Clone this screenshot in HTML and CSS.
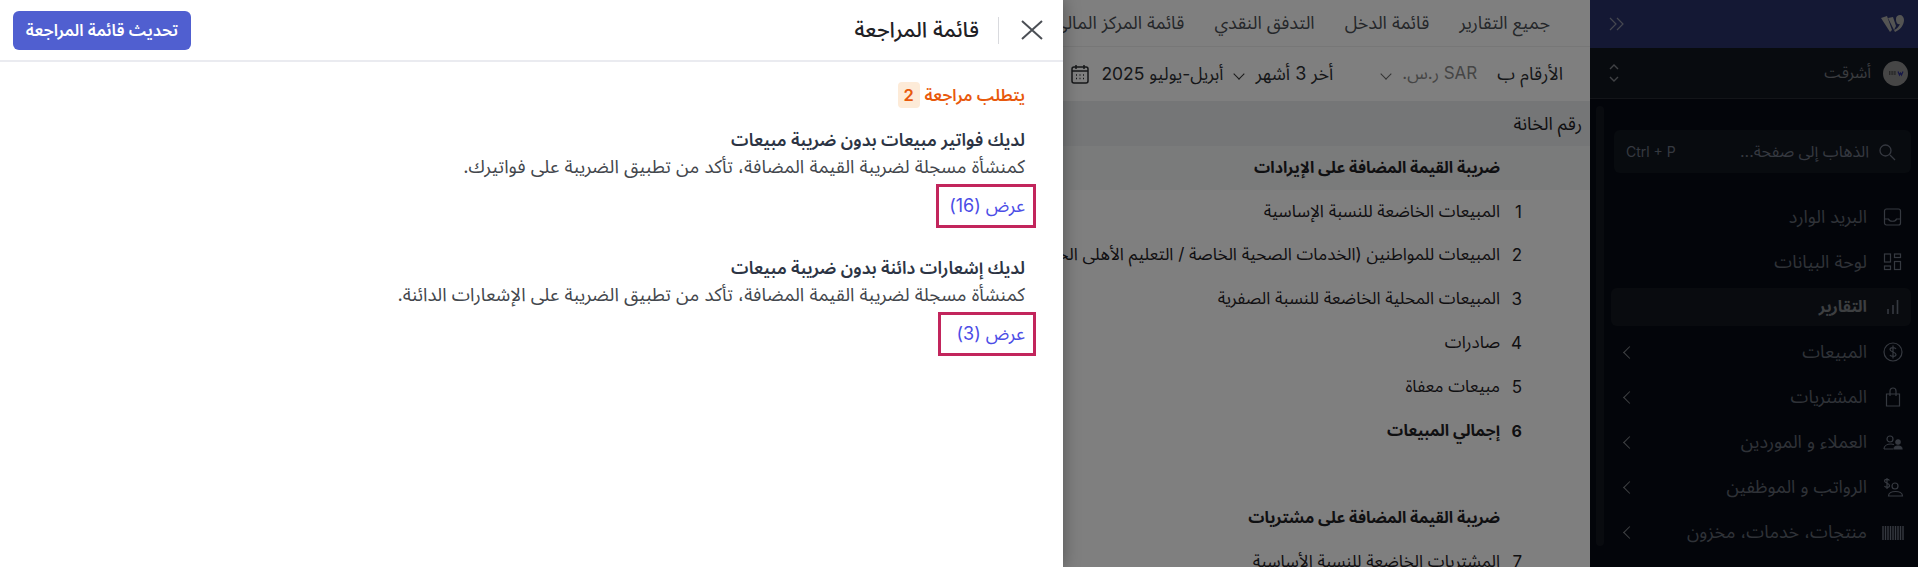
FILE: index.html
```html
<!DOCTYPE html>
<html lang="ar" dir="rtl">
<head>
    <meta charset="UTF-8">
    <title>قائمة المراجعة</title>
    <link rel="stylesheet" href="styles.css">
</head>
<body>
    <div class="app">
        <aside class="sidebar">
            <div class="brand">
                <svg class="logo" width="23" height="18" viewBox="0 0 23 18"><path d="M0 3l6-2 5 14-2 2zM7 3l5-1 3 9-2 4zM15 4c0-3 2-4 4-4s4 2 4 5c0 5-4 10-9 12l-1-2c3-1 5-4 6-6-3 1-4-2-4-5z" fill="#a9a9a6"/></svg>
                <svg class="icon-sm" width="16" height="14" viewBox="0 0 16 14"><path d="M8 1l6 6-6 6M1 1l6 6-6 6" fill="none" stroke="#8b8f9f" stroke-width="1.2"/></svg>
            </div>
            <div class="org">
                <svg class="org-avatar" width="25" height="25" viewBox="0 0 25 25"><circle cx="12.500" cy="12.500" r="12.500" fill="#8c8c8c"/><path d="M6 11h7M6 13h7" stroke="#3c3c3c" stroke-width="1.500" stroke-dasharray="1 .6"/><path d="M15 10.500l1.500 3.500 1-2 1 2 1.500-3.500" fill="none" stroke="#2b2f8f" stroke-width="1.200"/></svg>
                <span class="org-name">أشرقت</span>
                <svg class="org-switch" width="10" height="20" viewBox="0 0 10 20"><path d="M1 6l4-4 4 4M1 14l4 4 4-4" fill="none" stroke="#80848a" stroke-width="1.4"/></svg>
            </div>
            <div class="side-body">
                <div class="search">
                    <svg width="18" height="18" viewBox="0 0 18 18"><circle cx="7.500" cy="7.500" r="5.500" fill="none" stroke="#6b7280" stroke-width="1.3"/><path d="M12 12l5 5" stroke="#6b7280" stroke-width="1.3"/></svg>
                    <span class="search-text">الذهاب إلى صفحة...</span>
                    <span class="search-key">Ctrl + P</span>
                </div>
                <nav class="menu">
                    <a class="menu-item">
                        <svg viewBox="0 0 20 20"><rect x="1.500" y="2" width="16" height="16" rx="2"/><path d="M1.500 12h4c1 3 7 3 8 0h4"/></svg>
                        <span>البريد الوارد</span>
                    </a>
                    <a class="menu-item">
                        <svg viewBox="0 0 20 20"><rect x="1.500" y="2" width="6" height="8"/><rect x="11.500" y="2" width="6" height="3.500"/><rect x="1.500" y="14" width="6" height="3.500"/><rect x="11.500" y="9.500" width="6" height="8"/></svg>
                        <span>لوحة البيانات</span>
                    </a>
                    <a class="menu-item active">
                        <svg viewBox="0 0 20 20"><path d="M5 17v-5M10 17V8M14.500 17V3" stroke-width="1.600"/></svg>
                        <span>التقارير</span>
                    </a>
                    <a class="menu-item">
                        <svg viewBox="0 0 20 20"><circle cx="10" cy="10" r="9"/><path d="M13 7c-1-2-6-2-6 .500s6 2.500 6 5-5 2.500-6 .500M10 3.500v13"/></svg>
                        <span>المبيعات</span><i class="chev"></i>
                    </a>
                    <a class="menu-item">
                        <svg viewBox="0 0 20 20"><path d="M3.500 7h13v12h-13zM7 9V4c0-4 6-4 6 0v5"/></svg>
                        <span>المشتريات</span><i class="chev"></i>
                    </a>
                    <a class="menu-item">
                        <svg viewBox="0 0 20 20"><circle cx="7" cy="7" r="3"/><path d="M1 17c0-3 3-5 7-5 1 0 2 .2 3 .5M1 17h9"/><circle cx="15" cy="10" r="2.200" fill="#6b7280"/><path d="M11 17c0-4 8-4 8 0z" fill="#6b7280"/></svg>
                        <span>العملاء و الموردين</span><i class="chev"></i>
                    </a>
                    <a class="menu-item">
                        <svg viewBox="0 0 20 20"><circle cx="12" cy="9" r="3"/><path d="M5.500 19c0-6 14-6 14 0z"/><path d="M6.500 3.500c-1-1.500-5-1.500-5 .500s5 2 5 4.500-4 2.500-5 .500M4 1v11"/></svg>
                        <span>الرواتب و الموظفين</span><i class="chev"></i>
                    </a>
                    <a class="menu-item">
                        <svg viewBox="0 0 20 20"><path d="M0 4v14M2.500 4v14M5 4v14M7.500 4v14M10 4v14M12.500 4v14M15 4v14M17.500 4v14M20 4v14" stroke-width="1.400"/></svg>
                        <span>منتجات، خدمات، مخزون</span><i class="chev"></i>
                    </a>
                </nav>
            </div>
        </aside>

        <main class="main">
            <div class="tabs">
                <span>جميع التقارير</span>
                <span>قائمة الدخل</span>
                <span>التدفق النقدي</span>
                <span>قائمة المركز المالي</span>
            </div>
            <div class="toolbar">
                <span class="toolbar-label">الأرقام ب</span>
                <span class="toolbar-cur">SAR ر.س.</span>
                <i class="chev-down chev-muted"></i>
                <span class="toolbar-range">أخر 3 أشهر</span>
                <i class="chev-down"></i>
                <span class="toolbar-date">أبريل-يوليو 2025</span>
                <svg width="18" height="20" viewBox="0 0 18 20"><rect x="1" y="3" width="16" height="16" rx="2" fill="none" stroke="#2d2f33" stroke-width="1.500"/><path d="M1 7h16M5 1v4M13 1v4M5 11h1M8.500 11h1M12 11h1M5 14.500h1M8.500 14.500h1M12 14.500h1" stroke="#2d2f33" stroke-width="1.500"/></svg>
            </div>
            <div class="table-head">رقم الخانة</div>
            <div class="row row-section"><span class="num"></span><span>ضريبة القيمة المضافة على الإيرادات</span></div>
            <div class="row"><span class="num">1</span><span>المبيعات الخاضعة للنسبة الإساسية</span></div>
            <div class="row"><span class="num">2</span><span>المبيعات للمواطنين (الخدمات الصحية الخاصة / التعليم الأهلى الخاص)</span></div>
            <div class="row"><span class="num">3</span><span>المبيعات المحلية الخاضعة للنسبة الصفرية</span></div>
            <div class="row"><span class="num">4</span><span>صادرات</span></div>
            <div class="row"><span class="num">5</span><span>مبيعات معفاة</span></div>
            <div class="row row-total"><span class="num">6</span><span>إجمالي المبيعات</span></div>
            <div class="row-gap"></div>
            <div class="row row-total"><span class="num"></span><span>ضريبة القيمة المضافة على مشتريات</span></div>
            <div class="row"><span class="num">7</span><span>المشتريات الخاضعة للنسبة الأساسية</span></div>
        </main>

        <div class="overlay"></div>

        <section class="drawer">
            <header class="drawer-head">
                <svg class="close" width="22" height="20" viewBox="0 0 22 20"><path d="M1 1l20 18M21 1L1 19" stroke="#4b4f55" stroke-width="2"/></svg>
                <span class="drawer-sep"></span>
                <h2 class="drawer-title">قائمة المراجعة</h2>
                <button class="refresh-btn">تحديث قائمة المراجعة</button>
            </header>
            <div class="drawer-body">
                <div class="group-title">يتطلب مراجعة <span class="badge">2</span></div>
                <div class="check">
                    <div class="check-title">لديك فواتير مبيعات بدون ضريبة مبيعات</div>
                    <div class="check-desc">كمنشأة مسجلة لضريبة القيمة المضافة، تأكد من تطبيق الضريبة على فواتيرك.</div>
                    <a class="check-link">عرض (16)</a>
                </div>
                <div class="check">
                    <div class="check-title">لديك إشعارات دائنة بدون ضريبة مبيعات</div>
                    <div class="check-desc">كمنشأة مسجلة لضريبة القيمة المضافة، تأكد من تطبيق الضريبة على الإشعارات الدائنة.</div>
                    <a class="check-link">عرض (3)</a>
                </div>
            </div>
        </section>
    </div>
</body>
</html>
```

FILE: styles.css
```css
* {
    box-sizing: border-box;
}

html, body {
    margin: 0;
    height: 567px;
    overflow: hidden;
}

body {
    font-family: Inter, "Noto Sans Arabic", "DejaVu Sans", sans-serif;
    font-size: 17px;
    color: #1f2125;
}

.app {
    position: relative;
    display: flex;
    width: 1918px;
    height: 567px;
    overflow: hidden;
    background: #fff;
}

/* sidebar */
.sidebar {
    width: 328px;
    flex: none;
    background: #070b14;
    color: #6b7280;
    font-size: 18px;
}

.brand {
    height: 48px;
    background: #283069;
    display: flex;
    align-items: center;
    justify-content: space-between;
    padding: 0 14px 0 19px;
}

.org {
    height: 51px;
    background: #11161f;
    border-bottom: 1px solid #272b33;
    display: flex;
    align-items: center;
    gap: 12px;
    padding: 0 10px 0 19px;
}

.org-avatar {
    flex: none;
}

.org-name {
    flex: 1;
    color: #75797f;
    font-size: 16px;
}

.side-body {
    position: relative;
    padding: 31px 7px 0 24px;
}

.side-body::before {
    content: "";
    position: absolute;
    left: 6px;
    top: 7px;
    width: 8px;
    height: 440px;
    border-radius: 4px;
    background: #12161f;
}

.search {
    height: 43px;
    border-radius: 6px;
    background: #11161f;
    display: flex;
    align-items: center;
    gap: 9px;
    padding: 0 15px 0 12px;
    font-size: 16px;
}

.search-text {
    flex: 1;
}

.search-key {
    font-size: 14px;
}

.menu {
    margin: 25px 0 0 -3px;
    display: flex;
    flex-direction: column;
    gap: 7px;
}

.menu-item {
    height: 38px;
    display: flex;
    align-items: center;
    gap: 16px;
    padding: 0 8px 0 14px;
    border-radius: 6px;
    color: #5f6570;
}

.menu-item svg {
    width: 20px;
    height: 20px;
    flex: none;
    overflow: visible;
    fill: none;
    stroke: #6b7280;
    stroke-width: 1.2;
}

.menu-item span {
    flex: 1;
}

.menu-item.active {
    background: #12171f;
    color: #7b7e83;
    font-size: 16px;
    font-weight: 700;
}

.chev {
    width: 9px;
    height: 9px;
    border-left: 1.500px solid #80848a;
    border-bottom: 1.500px solid #80848a;
    transform: rotate(45deg);
}

/* page under the drawer */
.main {
    flex: 1;
    min-width: 0;
    background: #fff;
    overflow: hidden;
}

.tabs {
    height: 47px;
    display: flex;
    align-items: center;
    gap: 30px;
    padding-right: 40px;
    border-bottom: 1px solid #eee;
    color: #4b4f55;
    font-size: 18px;
}

.tabs span {
    white-space: nowrap;
}

.toolbar {
    height: 54px;
    display: flex;
    align-items: center;
    padding-right: 27px;
    font-size: 18px;
    color: #2d2f33;
}

.toolbar-cur {
    color: #8a8a8a;
    margin: 0 20px 0 12px;
    font-size: 17px;
}

.toolbar-range {
    margin: 0 49px 0 12px;
}

.toolbar-date {
    margin: 0 12px;
    font-size: 17.500px;
}

.chev-down {
    width: 8px;
    height: 8px;
    border-left: 1.500px solid #333;
    border-bottom: 1.500px solid #333;
    transform: rotate(-45deg);
}

.chev-muted {
    border-color: #666;
}

.table-head {
    height: 45px;
    background: #ebecee;
    display: flex;
    align-items: center;
    padding-right: 8px;
    font-size: 18px;
}

.row {
    height: 43.800px;
    display: flex;
    align-items: center;
    white-space: nowrap;
    padding-right: 68px;
}

.row-section {
    background: #f5f6f7;
    font-size: 16px;
    font-weight: 700;
}

.row-total {
    font-size: 16px;
    font-weight: 700;
}

.row-gap {
    height: 44px;
}

.num {
    width: 22px;
    flex: none;
}

/* dim layer and drawer on top */
.overlay {
    position: absolute;
    inset: 0;
    background: rgba(0, 0, 0, 0.5);
}

.drawer {
    position: absolute;
    left: 0;
    top: 0;
    bottom: 0;
    width: 1063px;
    background: #fff;
    box-shadow: 0 0 16px rgba(0, 0, 0, 0.35);
}

.drawer-head {
    height: 62px;
    border-bottom: 2px solid #eaebf0;
    display: flex;
    align-items: center;
    padding: 0 20px 0 13px;
}

.close {
    flex: none;
}

.drawer-sep {
    width: 1px;
    height: 27px;
    background: #d9dade;
    margin: 0 22px 0 19px;
}

.drawer-title {
    flex: 1;
    margin: 0;
    font-size: 21.500px;
    font-weight: 500;
}

.refresh-btn {
    width: 178px;
    height: 39px;
    padding: 0;
    border: none;
    border-radius: 6px;
    background: #505fd0;
    color: #fff;
    font: inherit;
    font-size: 16.500px;
    font-weight: 600;
}

.drawer-body {
    padding: 20px 38px 0 0;
}

.group-title {
    height: 26px;
    color: #e8590c;
    font-size: 16.500px;
    font-weight: 600;
    display: flex;
    align-items: center;
    gap: 5px;
}

.badge {
    width: 22px;
    height: 26px;
    border-radius: 4px;
    background: #fdebd8;
    text-align: center;
    line-height: 26px;
}

.check {
    margin-top: 18px;
}

.check + .check {
    margin-top: 26px;
}

.check-title {
    font-size: 17.500px;
    font-weight: 600;
    color: #2c3444;
    line-height: 27px;
}

.check-desc {
    font-size: 18.500px;
    color: #43474d;
    line-height: 27px;
}

.check-link {
    display: inline-block;
    min-width: 98px;
    margin-top: 4px;
    margin-right: -11px;
    padding: 0 8px 0 10px;
    font-size: 18px;
    line-height: 38px;
    border: 3px solid #c2255c;
    color: #4c4de6;
}
```
